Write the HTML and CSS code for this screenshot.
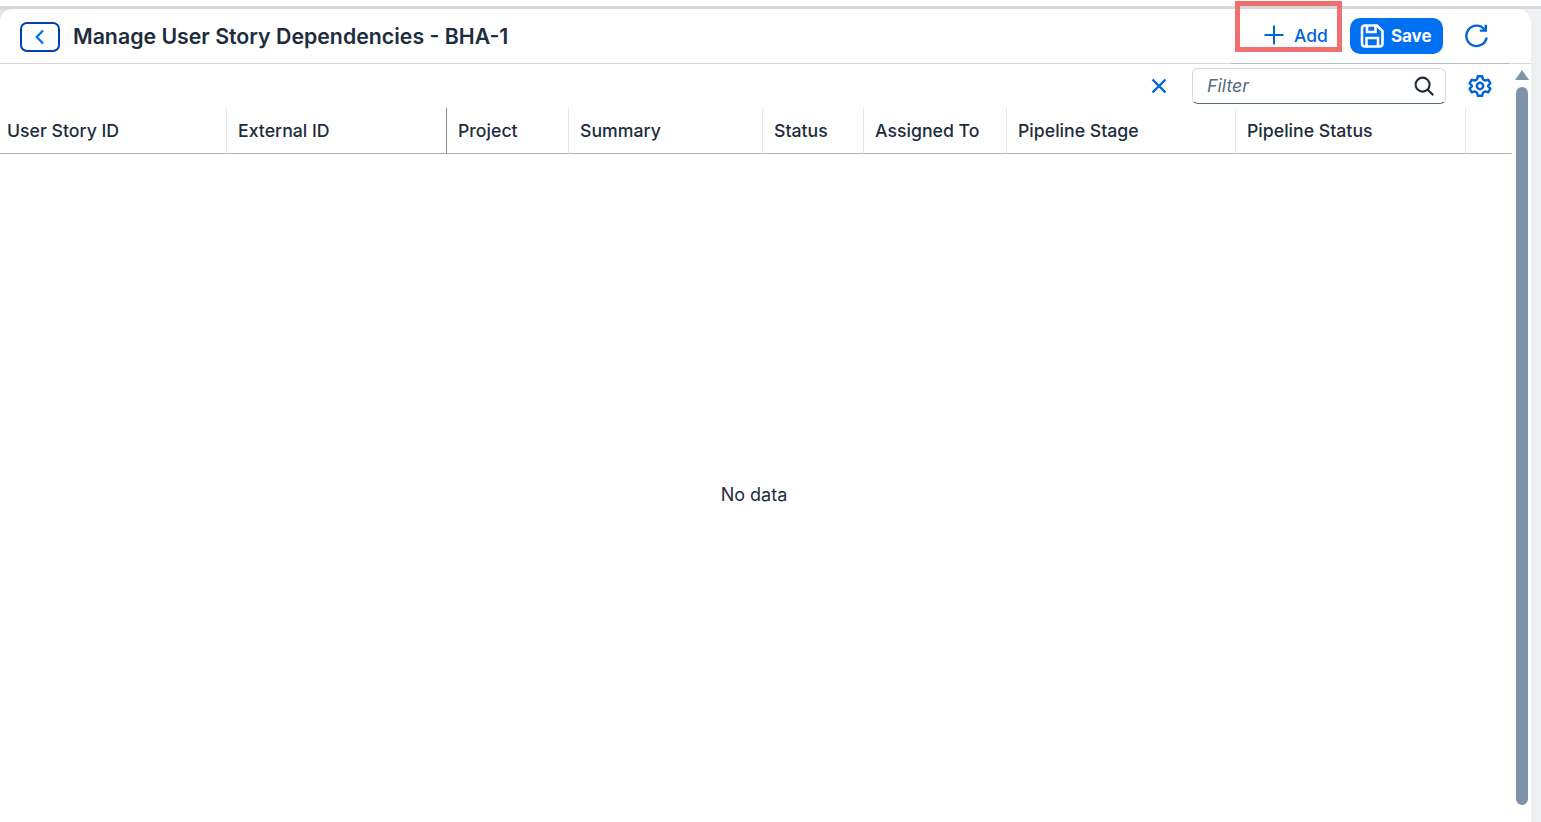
FILE: index.html
```html
<!DOCTYPE html>
<html lang="en">
<head>
    <meta charset="UTF-8">
    <meta name="viewport" content="width=device-width, initial-scale=1.0">
    <title>Manage User Story Dependencies</title>
    <link rel="stylesheet" href="styles.css">
</head>
<body>
    <div class="page">
        <header class="header">
            <button class="back-btn" type="button" aria-label="Back">
                <svg width="14" height="18" viewBox="0 0 14 18"><path d="M10 2.5 L3.8 9 L10 15.5" fill="none" stroke="#0070f2" stroke-width="2.3"/></svg>
            </button>
            <h1 class="title">Manage User Story Dependencies - BHA-1</h1>
            <div class="actions">
                <button class="add-btn" type="button">
                    <svg width="20" height="20" viewBox="0 0 20 20"><path d="M10 0.5 V19.5 M0.5 10 H19.5" fill="none" stroke="#0064d9" stroke-width="2"/></svg>
                    <span>Add</span>
                </button>
                <button class="save-btn" type="button">
                    <svg width="24" height="24" viewBox="0 0 24 24" fill="none" stroke="#fff" stroke-width="2.6"><path d="M2 4.5 Q2 1.5 5 1.5 H17 L22.5 7 V19.5 Q22.5 22.5 19.5 22.5 H5 Q2 22.5 2 19.5 Z"/><path d="M7 2 V8 H15.5 V2"/><path d="M6.5 22 V14 H18 V22"/></svg>
                    <span>Save</span>
                </button>
                <button class="icon-btn refresh-btn" type="button" aria-label="Refresh">
                    <svg width="24" height="24" viewBox="0 0 24 24" fill="none" stroke="#0064d9" stroke-width="2.4"><path d="M20.5 5.5 A10.2 10.2 0 1 0 22.6 13.5"/><path d="M21.8 0.8 V6.6 H15.8"/></svg>
                </button>
            </div>
        </header>
        <div class="content">
            <div class="main">
                <div class="toolbar">
                    <button class="icon-btn clear-btn" type="button" aria-label="Clear">
                        <svg width="16" height="16" viewBox="0 0 16 16"><path d="M1.5 1.5 L14.5 14.5 M14.5 1.5 L1.5 14.5" fill="none" stroke="#0064d9" stroke-width="2.4"/></svg>
                    </button>
                    <div class="filter">
                        <span class="filter-text">Filter</span>
                        <svg width="20" height="20" viewBox="0 0 20 20" fill="none" stroke="#1d2d3e" stroke-width="2.1"><circle cx="8.6" cy="8.6" r="7"/><path d="M13.6 13.6 L19.2 19.2"/></svg>
                    </div>
                    <button class="icon-btn gear-btn" type="button" aria-label="Settings">
                        <svg width="24" height="24" viewBox="0 0 24 24" fill="none" stroke="#0064d9" stroke-width="2.4" stroke-linejoin="round"><path d="M9.8 2.2 H14.2 L14.9 5.2 L17.3 6.6 L20.2 5.7 L22.4 9.4 L20.2 11.5 V12.5 L22.4 14.6 L20.2 18.3 L17.3 17.4 L14.9 18.8 L14.2 21.8 H9.8 L9.1 18.8 L6.7 17.4 L3.8 18.3 L1.6 14.6 L3.8 12.5 V11.5 L1.6 9.4 L3.8 5.7 L6.7 6.6 L9.1 5.2 Z"/><circle cx="12" cy="12" r="3.2"/></svg>
                    </button>
                </div>
                <div class="table-head">
                    <div class="th">User Story ID</div>
                    <div class="th th-sep">External ID</div>
                    <div class="th">Project</div>
                    <div class="th">Summary</div>
                    <div class="th">Status</div>
                    <div class="th">Assigned To</div>
                    <div class="th">Pipeline Stage</div>
                    <div class="th">Pipeline Status</div>
                    <div class="th"></div>
                </div>
                <div class="table-body">No data</div>
            </div>
            <div class="scrollbar">
                <div class="scroll-arrow"></div>
                <div class="scroll-thumb"></div>
            </div>
        </div>
    </div>
    <div class="highlight"></div>
</body>
</html>
```

FILE: styles.css
```css
* {
    box-sizing: border-box;
}
html, body {
    height: 100%;
}
body {
    margin: 0;
    padding: 6px 0 0 0;
    height: 822px;
    overflow: hidden;
    background: #fff;
    font-family: Inter, Arial, sans-serif;
    color: #1d2d3e;
}
button {
    font-family: inherit;
    border: none;
    background: none;
    padding: 0;
    cursor: pointer;
}
.page {
    height: 816px;
    display: flex;
    flex-direction: column;
    border-top: 3px solid #d5d9de;
    background: linear-gradient(to right, #dfe3e6, #eef0f2);
}
.header {
    width: 1531px;
    height: 55px;
    flex: none;
    display: flex;
    align-items: stretch;
    padding: 0 0 0 20px;
    background: #fff;
    border-radius: 12px 14px 0 0;
    border-bottom: 1px solid #d5dadd;
}
.back-btn {
    width: 40px;
    height: 30px;
    border: 2px solid #0040b0;
    border-radius: 7px;
    display: flex;
    align-items: center;
    justify-content: center;
    align-self: center;
    margin-top: 1px;
}
.title {
    margin: 0 0 0 13px;
    font-size: 21.3px;
    font-weight: 600;
    line-height: 55px;
}
.actions {
    width: 278px;
    margin-left: auto;
    margin-right: 22px;
    margin-bottom: -1px;
    padding-left: 33px;
    display: flex;
    align-items: center;
    border-bottom: 1px solid #b3becb;
}
.add-btn {
    display: flex;
    align-items: center;
    gap: 10px;
    color: #0064d9;
    font-size: 17.5px;
    font-weight: 500;
    margin: 0 22px 2px 0;
}
.save-btn {
    width: 93px;
    height: 36px;
    display: flex;
    align-items: center;
    gap: 7px;
    padding-left: 10px;
    background: #0070f2;
    color: #fff;
    border-radius: 10px;
    font-size: 17px;
    font-weight: 700;
}
.icon-btn {
    display: flex;
    align-items: center;
    justify-content: center;
}
.refresh-btn {
    margin-left: 21px;
}
.content {
    flex: 1;
    display: flex;
    width: 1531px;
    background: #fff;
}
.main {
    width: 1512px;
    display: flex;
    flex-direction: column;
}
.toolbar {
    height: 44px;
    display: flex;
    align-items: center;
    justify-content: flex-end;
    padding-right: 20px;
}
.clear-btn {
    margin-right: 25px;
}
.filter {
    width: 254px;
    height: 36px;
    display: flex;
    align-items: center;
    justify-content: space-between;
    padding: 0 11px 0 14px;
    border: 1px solid #d5dadd;
    border-bottom: 1px solid #556b82;
    border-radius: 6px;
    margin-right: 22px;
}
.filter-text {
    font-size: 17.8px;
    font-style: italic;
    color: #556b82;
    margin-bottom: 2px;
}
.table-head {
    height: 46px;
    flex: none;
    display: grid;
    grid-template-columns: 227px 220px 122px 194px 101px 143px 229px 230px 46px;
    border-bottom: 1px solid #b0b4b8;
}
.th {
    padding-left: 11px;
    border-right: 1px solid #e5e5e5;
    font-size: 17.7px;
    font-weight: 500;
    line-height: 46px;
    white-space: nowrap;
}
.th:first-child {
    padding-left: 7px;
}
.th-sep {
    border-right-color: #8a9096;
}
.th:last-child {
    border-right: none;
}
.table-body {
    flex: 1;
    display: flex;
    align-items: center;
    justify-content: center;
    padding: 13px 4px 0 0;
    font-size: 18px;
}
.scrollbar {
    width: 19px;
    padding-left: 3px;
    display: flex;
    flex-direction: column;
}
.scroll-arrow {
    margin-top: 6px;
    width: 0;
    height: 0;
    border-left: 7px solid transparent;
    border-right: 7px solid transparent;
    border-bottom: 10px solid #7e93a8;
}
.scroll-thumb {
    margin-top: 7px;
    width: 12px;
    height: 718px;
    border-radius: 6px;
    background: #7e93a8;
    margin-left: 1px;
}
.highlight {
    position: absolute;
    left: 1235px;
    top: 1px;
    width: 107px;
    height: 51px;
    border: 5px solid #f07070;
}
```
